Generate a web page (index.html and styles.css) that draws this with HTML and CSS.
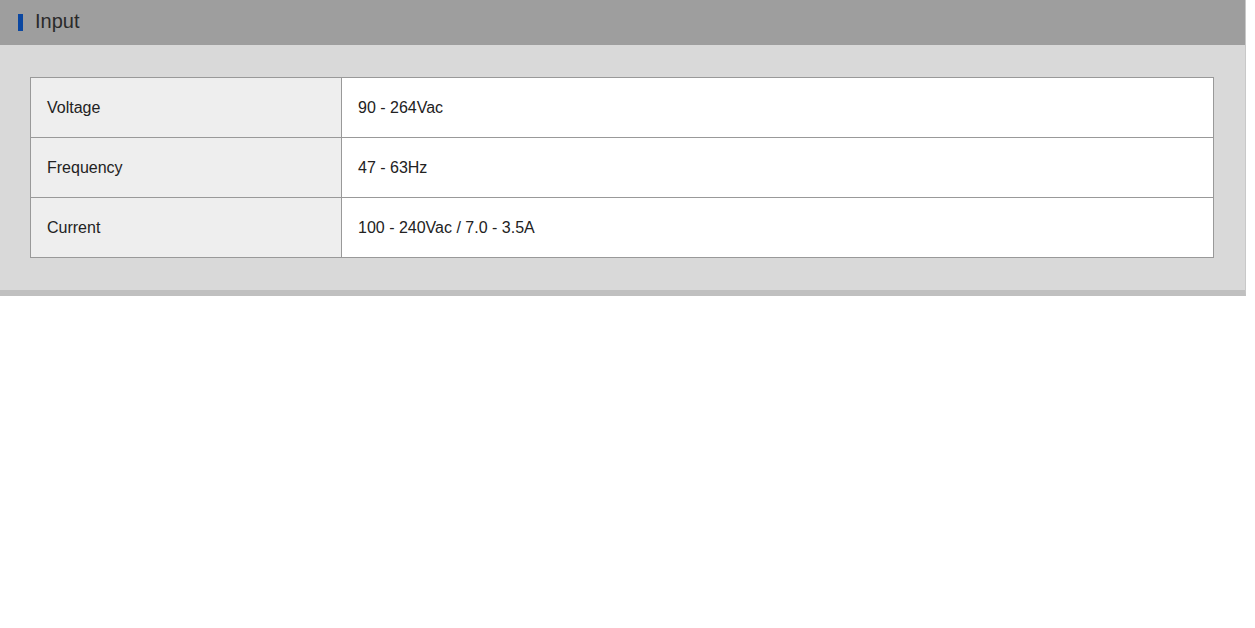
FILE: index.html
```html
<!DOCTYPE html>
<html lang="en">
<head>
    <meta charset="UTF-8">
    <title>Input</title>
    <link rel="stylesheet" href="styles.css">
</head>
<body>
    <div class="spec-panel">
        <div class="spec-header">
            <span class="spec-mark"></span>
            <h2 class="spec-title">Input</h2>
        </div>
        <div class="spec-body">
            <table class="spec-table">
                <tr>
                    <td class="spec-label">Voltage</td>
                    <td class="spec-value">90 - 264Vac</td>
                </tr>
                <tr>
                    <td class="spec-label">Frequency</td>
                    <td class="spec-value">47 - 63Hz</td>
                </tr>
                <tr>
                    <td class="spec-label">Current</td>
                    <td class="spec-value">100 - 240Vac / 7.0 - 3.5A</td>
                </tr>
            </table>
        </div>
    </div>
</body>
</html>
```

FILE: styles.css
```css
* {
    margin: 0;
    padding: 0;
    box-sizing: border-box;
}

body {
    background: #fff;
    font-family: "Liberation Sans", Arial, sans-serif;
    color: #222;
}

.spec-panel {
    width: 1246px;
    border-right: 1px solid #c8c8c8;
    border-bottom: 6px solid #c0c0c0;
}

.spec-header {
    height: 45px;
    background: #9e9e9e;
    display: flex;
    align-items: center;
    padding-left: 18px;
    gap: 12px;
}

.spec-mark {
    width: 5px;
    height: 17px;
    background: #0b47a1;
}

.spec-title {
    font-size: 20px;
    font-weight: normal;
    color: #2a2a2a;
    line-height: 1;
    margin-top: -3px;
}

.spec-body {
    background: #d9d9d9;
    padding: 32px 31px 32px 30px;
}

.spec-table {
    width: 100%;
    border-collapse: collapse;
    border: 1px solid #999;
    font-size: 16px;
}

.spec-table td {
    height: 60px;
    border: 1px solid #999;
    padding: 0 16px;
    vertical-align: middle;
}

.spec-label {
    width: 311px;
    background: #eee;
}

.spec-value {
    background: #fff;
}
```
